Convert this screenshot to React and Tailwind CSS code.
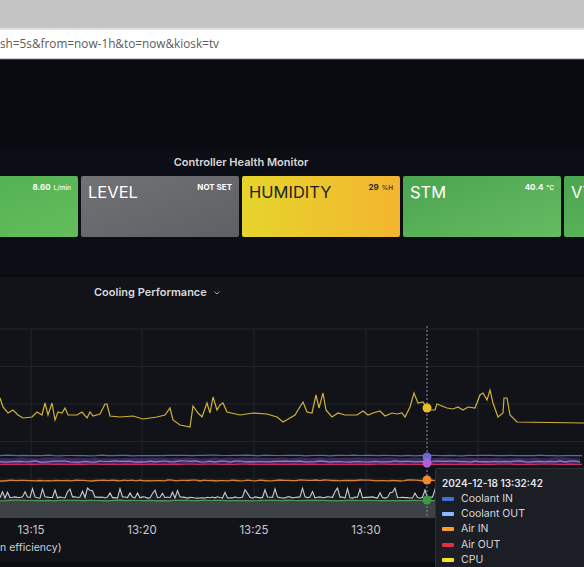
import React from 'react';

const rand = (i) => {
  const x = Math.sin(i * 12.9898 + 78.233) * 43758.5453;
  return x - Math.floor(x);
};

const toPath = (pts) => pts.map((p, i) => `${i ? 'L' : 'M'}${p[0].toFixed(1)} ${p[1].toFixed(1)}`).join(' ');

// CPU trace, hand-read from the reference
const cpu = [
  [0, 398], [3, 407], [8, 413], [13, 410], [18, 415], [23, 418], [32, 417], [37, 412], [42, 415], [45, 403],
  [48, 415], [52, 403], [55, 420], [58, 412], [62, 413], [65, 408], [68, 415], [77, 415], [82, 412], [87, 418],
  [90, 412], [93, 416], [100, 414], [105, 404], [107, 404], [110, 416], [120, 417], [133, 416], [143, 419],
  [157, 417], [165, 415], [170, 408], [173, 420], [180, 425], [190, 427], [193, 406], [198, 413], [202, 417],
  [207, 403], [210, 413], [213, 397], [217, 410], [220, 405], [223, 403], [227, 412], [240, 415], [253, 413],
  [267, 414], [277, 417], [283, 422], [290, 418], [295, 415], [298, 410], [303, 402], [307, 412], [312, 413],
  [316, 395], [319, 408], [323, 393], [326, 410], [332, 417], [338, 413], [345, 415], [357, 415], [363, 411],
  [368, 415], [373, 413], [380, 411], [385, 416], [392, 413], [397, 414], [402, 413], [405, 417], [410, 407],
  [414, 393], [418, 403], [423, 402], [427, 408], [430, 410], [435, 410], [437, 404], [442, 406], [447, 408],
  [453, 409], [458, 407], [463, 410], [468, 407], [475, 408], [480, 395], [483, 393], [487, 400], [490, 390],
  [493, 403], [498, 417], [503, 413], [504, 398], [507, 398], [510, 415], [517, 422], [584, 423],
];

const wobble = (base, amp, seed, step = 4, x0 = 0, x1 = 584) => {
  const pts = [];
  for (let x = x0, i = 0; x <= x1; x += step, i++) pts.push([x, base + (rand(i + seed) - 0.5) * amp]);
  return pts;
};

const white = (() => {
  const pts = [];
  for (let x = 0, i = 0; x <= 440; x += 2.5, i++) {
    const r = rand(i * 3 + 11);
    if (r > 0.8) pts.push([x, 497 - (3 + rand(i + 400) * 6)]);
    else pts.push([x, 497.5 + (rand(i + 900) - 0.5) * 1.4]);
  }
  return pts;
})();

const purpleTop = wobble(458, 1.2, 200, 5);
const purpleLine = wobble(461.5, 1.4, 300, 5);

const Chart = () => {
  const band = [...purpleTop, ...wobble(464, 0.6, 500, 5).reverse()];
  const whiteFill = `${toPath(white)} L440 518 L0 518 Z`;
  return (
    <svg width="584" height="218" viewBox="0 300 584 218" className="block">
      {[329, 366.5, 404, 441.5, 479].map((y) => (
        <line key={y} x1="0" x2="584" y1={y} y2={y} stroke="#23262d" strokeWidth="1" />
      ))}
      {[31, 142, 254, 366, 478].map((x) => (
        <line key={x} x1={x} x2={x} y1="329" y2="518" stroke="#23262d" strokeWidth="1" />
      ))}
      <rect x="0" y="500" width="584" height="18" fill="#34373d" />
      <path d={whiteFill} fill="rgba(255,255,255,0.05)" />
      <path d={toPath(band) + ' Z'} fill="rgba(120,80,190,0.4)" />
      <path d={toPath(wobble(455.5, 0.6, 100, 6))} fill="none" stroke="#4a6fb0" strokeWidth="1.2" />
      <path d={toPath(purpleLine)} fill="none" stroke="#a874d8" strokeWidth="1.2" />
      <path d={toPath(wobble(464.3, 0.4, 600, 6))} fill="none" stroke="#c92f63" strokeWidth="1.2" />
      <path d={toPath(wobble(480.5, 1, 700, 4))} fill="none" stroke="#d9822f" strokeWidth="1.3" />
      <path d={toPath(wobble(500.5, 0.6, 800, 6))} fill="none" stroke="#4f9a52" strokeWidth="1.2" />
      <path d={toPath(white)} fill="none" stroke="#c9cbd0" strokeWidth="1.1" />
      <path d={toPath(cpu)} fill="none" stroke="#cfb23a" strokeWidth="1.2" />
      <line x1="427" x2="427" y1="326" y2="518" stroke="#7f93a8" strokeWidth="1" strokeDasharray="2 2" />
      <circle cx="427" cy="408" r="4.5" fill="#e8bf2a" />
      <circle cx="427" cy="457" r="4.5" fill="#6a6ad6" />
      <circle cx="427" cy="463" r="4.5" fill="#b060d0" />
      <circle cx="427" cy="480" r="4.5" fill="#f08a2a" />
      <circle cx="427" cy="500" r="4.5" fill="#3b9a3f" />
    </svg>
  );
};

const Tile = ({ label, value, unit, className, dark }) => (
  <div className={`relative w-[158px] h-[61px] shrink-0 rounded-[2px] ${className}`}>
    {label && (
      <div className={`absolute top-[2px] left-[7px] text-[16.5px] leading-[28px] ${dark ? 'text-[#1e1e1e]' : 'text-white'}`}>{label}</div>
    )}
    <div className={`absolute top-[5px] right-[7px] text-[8px] font-bold leading-[12px] ${dark ? 'text-[#2a2a2a]' : 'text-white'}`}>
      {value}
      {unit && <span className="text-[6.5px] font-medium ml-[3px]">{unit}</span>}
    </div>
  </div>
);

const legend = [
  ['Coolant IN', '#3d71d9'],
  ['Coolant OUT', '#8ab8ff'],
  ['Air IN', '#ff9830'],
  ['Air OUT', '#e02f44'],
  ['CPU', '#fade2a'],
];

export default function App() {
  return (
    <div className="relative w-[584px] h-[567px] overflow-hidden bg-[#090b11]" style={{ fontFamily: 'Inter, Roboto, sans-serif' }}>
      <div className="h-[28px] bg-[#c4c4c4]" />
      <div className="h-[2px] bg-[#e2e2e2]" />
      <div className="h-[28px] bg-white flex items-center text-[11.8px] text-[#5c5c5c]" style={{ fontFamily: '"Open Sans", sans-serif' }}>
        sh=5s&amp;from=now-1h&amp;to=now&amp;kiosk=tv
      </div>
      <div className="h-[1px] bg-[#cfcfcf]" />
      <div className="h-[1px] bg-[#3a3c40]" />
      <div className="h-[87px]" />

      <div className="h-[127px] bg-[#0c0e15]">
        <div className="w-[482px] pt-[7px] text-center text-[11px] leading-[16px] font-semibold text-[#d8d9dc]">
          Controller Health Monitor
        </div>
        <div className="mt-[6px] flex gap-[3px] ml-[-80px]">
          <Tile value="8.60" unit="L/min" className="bg-gradient-to-br from-[#4fae4f] to-[#63bd5c]" />
          <Tile label="LEVEL" value="NOT SET" className="bg-gradient-to-br from-[#707275] to-[#5e6063]" />
          <Tile label="HUMIDITY" value="29" unit="%H" dark className="bg-gradient-to-r from-[#e5d42b] to-[#f3b52f]" />
          <Tile label="STM" value="40.4" unit="°C" className="bg-gradient-to-br from-[#4aa54f] to-[#66bb62]" />
          <Tile label="VT" value="" className="bg-gradient-to-br from-[#4aa54f] to-[#66bb62]" />
        </div>
      </div>

      <div className="h-[3px]" />

      <div className="h-[285px] bg-[#111319]">
        <div className="pt-[7px] pl-[94px] flex items-center gap-[6px] text-[11px] leading-[16px] font-semibold text-[#d8d9dc]">
          Cooling Performance
          <svg width="8" height="8" viewBox="0 0 8 8" className="mt-[2px]">
            <path d="M1.5 2.5 L4 5 L6.5 2.5" fill="none" stroke="#a0a3aa" strokeWidth="1" />
          </svg>
        </div>
        <Chart />
        <div className="relative h-[22px] text-[11.5px] text-[#c7c8cb]">
          {[['13:15', 31], ['13:20', 142], ['13:25', 254], ['13:30', 366]].map(([t, x]) => (
            <span key={t} className="absolute top-[4px] -translate-x-1/2" style={{ left: x }}>{t}</span>
          ))}
        </div>
        <div className="h-[16px] flex items-center text-[10.5px] text-[#cfd0d4]">n efficiency)</div>
      </div>

      <div className="absolute left-[435px] top-[468px] w-[170px] h-[110px] bg-[#1b1e25] border border-[#2d3038] rounded-[2px] pl-[6px] pt-[7px]">
        <div className="text-[10px] leading-[15px] font-semibold text-[#e4e5e8]">2024-12-18 13:32:42</div>
        {legend.map(([name, color]) => (
          <div key={name} className="flex items-center h-[15.3px] text-[10.5px] text-[#d6d7db]">
            <span className="w-[12px] h-[4px] rounded-[1px] mr-[7px]" style={{ backgroundColor: color }} />
            {name}
          </div>
        ))}
      </div>
    </div>
  );
}
